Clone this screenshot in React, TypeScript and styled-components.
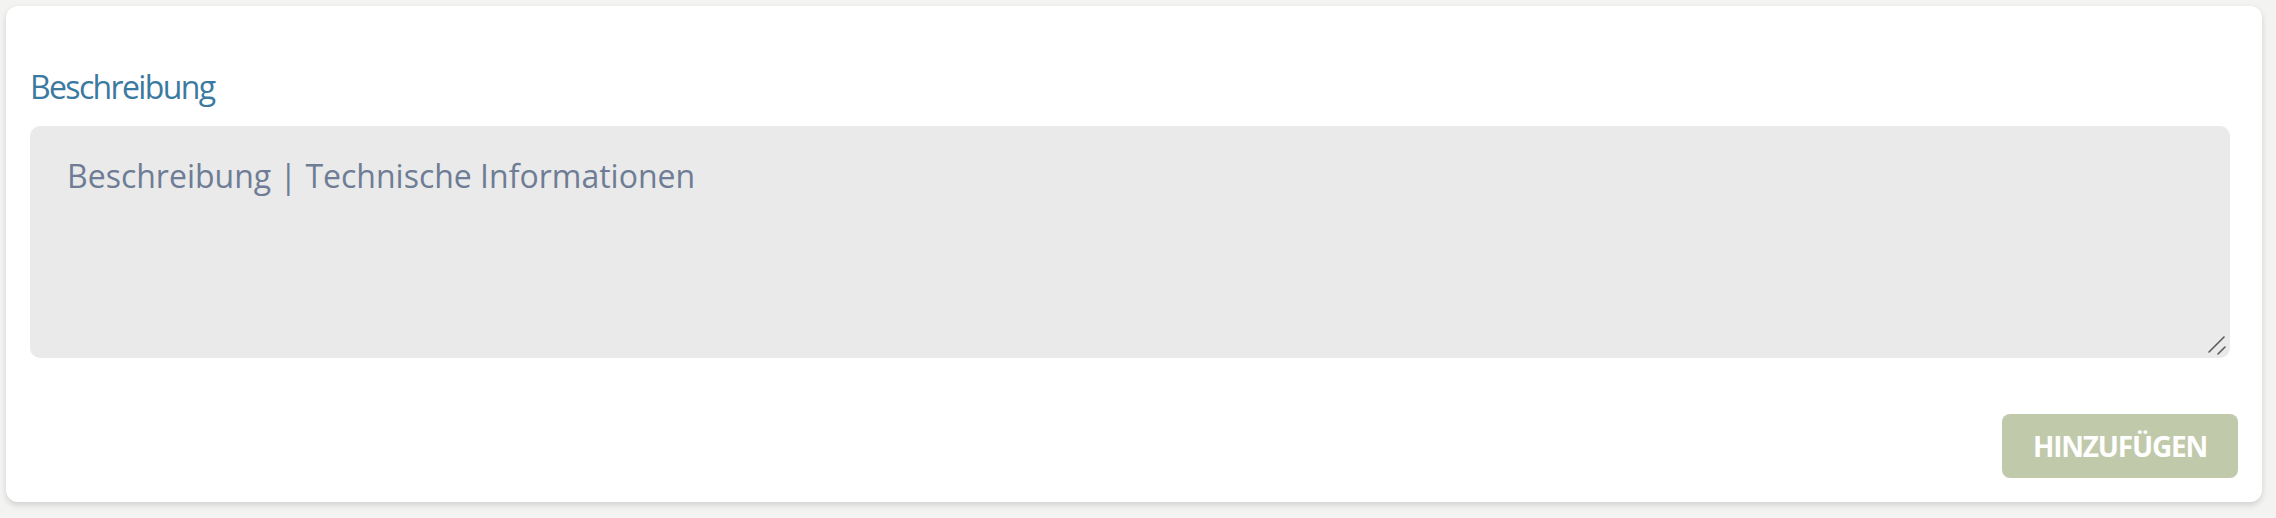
import React from "react";
import styled, { createGlobalStyle } from "styled-components";

const GlobalStyle = createGlobalStyle`
  html, body {
    margin: 0;
    padding: 0;
    background: #f3f3f1;
    font-family: "Open Sans", "Noto Sans", sans-serif;
  }
`;

const App = () => {
  return (
    <>
      <GlobalStyle />
      <Page>
        <Card>
          <Label htmlFor="beschreibung">Beschreibung</Label>
          <Field>
            <TextArea
              id="beschreibung"
              placeholder="Beschreibung | Technische Informationen"
            />
            <Grip width="24" height="24" viewBox="0 0 24 24">
              <line x1="3" y1="18" x2="18" y2="3" />
              <line x1="12" y1="20" x2="19" y2="13" />
            </Grip>
          </Field>
          <Actions>
            <AddButton type="button">HINZUFÜGEN</AddButton>
          </Actions>
        </Card>
      </Page>
    </>
  );
};

export default App;

const Page = styled.div`
  padding: 6px 14px 16px 6px;
`;

const Card = styled.div`
  background: #ffffff;
  border-radius: 12px;
  box-shadow: 0 3px 6px rgba(0, 0, 0, 0.14);
  padding: 59px 24px 24px 24px;
  height: 496px;
  box-sizing: border-box;
  display: flex;
  flex-direction: column;
`;

const Label = styled.label`
  display: block;
  color: #3b7aa0;
  font-size: 32px;
  line-height: 44px;
  letter-spacing: -1.65px;
  margin-bottom: 17px;
`;

const Field = styled.div`
  position: relative;
  width: calc(100% - 8px);
`;

const TextArea = styled.textarea`
  display: block;
  box-sizing: border-box;
  width: 100%;
  height: 232px;
  border: none;
  outline: none;
  border-radius: 10px;
  background: #eaeaea;
  padding: 28px 35px 28px 37px;
  font-family: "Open Sans", "Noto Sans", sans-serif;
  font-size: 32px;
  color: #333;
  resize: vertical;
  &::placeholder {
    color: #6e7d95;
  }
  &::-webkit-resizer {
    background: transparent;
  }
`;

const Grip = styled.svg`
  position: absolute;
  right: 0;
  bottom: 0;
  pointer-events: none;
  stroke: #5a5a5a;
  stroke-width: 1.6;
  stroke-linecap: round;
`;

const Actions = styled.div`
  display: flex;
  justify-content: flex-end;
  margin-top: 56px;
`;

const AddButton = styled.button`
  height: 64px;
  width: 236px;
  border: none;
  border-radius: 8px;
  background: #c1c9ab;
  color: #ffffff;
  font-family: "Open Sans", "Noto Sans", sans-serif;
  font-weight: 700;
  font-size: 28px;
  letter-spacing: -1.2px;
  cursor: pointer;
`;
